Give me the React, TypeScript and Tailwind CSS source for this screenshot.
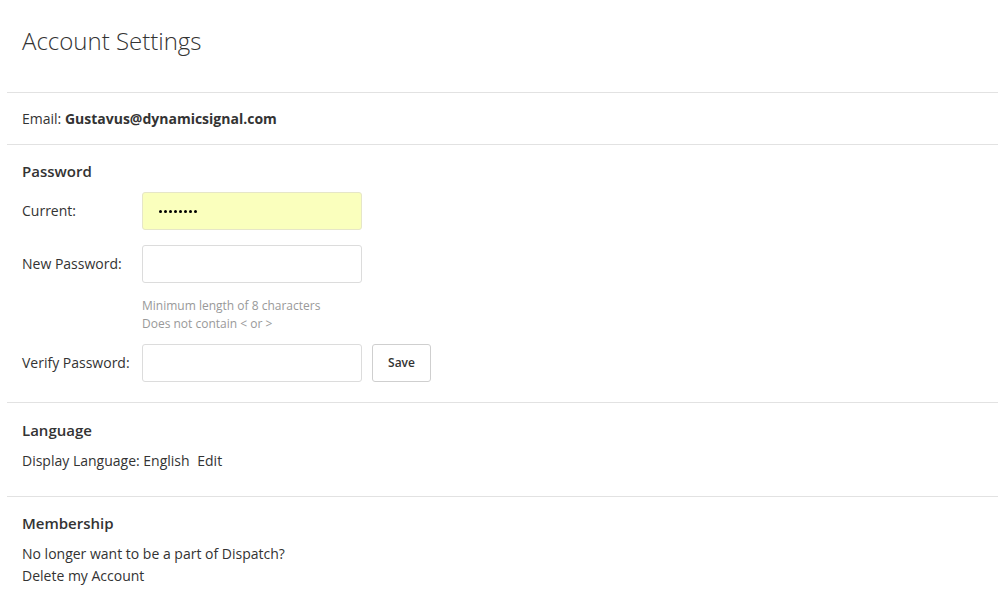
const font = { fontFamily: '"Open Sans", "Noto Sans", sans-serif' }

function Field({ label, filled }: { label: string; filled?: boolean }) {
  return (
    <div className="flex items-center">
      <label className="w-[120px] shrink-0 text-[14px] leading-[22px] text-[#333]">{label}</label>
      <div
        className={
          filled
            ? 'flex h-[38px] w-[220px] items-center gap-[2px] rounded-[3px] border border-[#e6e6c8] bg-[#faffbd] pl-[16px]'
            : 'h-[38px] w-[220px] rounded-[3px] border border-[#dcdcdc] bg-white'
        }
      >
        {filled
          ? Array.from({ length: 8 }).map((_, i) => (
              <span key={i} className="h-[3px] w-[3px] rounded-full bg-black" />
            ))
          : null}
      </div>
    </div>
  )
}

export default function App() {
  return (
    <div className="min-h-[591px] bg-white pl-[7px] text-[#333]" style={font}>
      <div className="h-[92px] pl-[15px] pt-[25px]">
        <h1 className="text-[24px] font-light leading-[32px] text-[#333]">Account Settings</h1>
      </div>

      <section className="border-t border-[#e2e2e2] pb-[14px] pl-[15px] pt-[15px] text-[14px] leading-[22px]">
        Email: <span className="font-bold">Gustavus@dynamicsignal.com</span>
      </section>

      <section className="border-t border-[#e2e2e2] pb-[20px] pl-[15px] pt-[15px]">
        <h2 className="text-[15px] font-semibold leading-[22px]">Password</h2>
        <div className="mt-[10px]">
          <Field label="Current:" filled />
        </div>
        <div className="mt-[15px]">
          <Field label="New Password:" />
        </div>
        <div className="ml-[120px] mt-[14px] text-[12px] leading-[18px] text-[#999]">
          <p>Minimum length of 8 characters</p>
          <p>Does not contain &lt; or &gt;</p>
        </div>
        <div className="mt-[11px] flex items-center">
          <Field label="Verify Password:" />
          <button className="ml-[10px] h-[38px] w-[59px] rounded-[3px] border border-[#cfcfcf] bg-white text-[12px] font-semibold text-[#333]">
            Save
          </button>
        </div>
      </section>

      <section className="border-t border-[#e2e2e2] pb-[24px] pl-[15px] pt-[16px]">
        <h2 className="text-[15px] font-semibold leading-[22px]">Language</h2>
        <p className="mt-[9px] text-[14px] leading-[22px]">
          Display Language: English <a className="ml-[4px] cursor-pointer">Edit</a>
        </p>
      </section>

      <section className="border-t border-[#e2e2e2] pl-[15px] pt-[15px]">
        <h2 className="text-[15px] font-semibold leading-[22px]">Membership</h2>
        <p className="mt-[9px] text-[14px] leading-[22px]">No longer want to be a part of Dispatch?</p>
        <a className="block cursor-pointer text-[14px] leading-[22px]">Delete my Account</a>
      </section>
    </div>
  )
}
